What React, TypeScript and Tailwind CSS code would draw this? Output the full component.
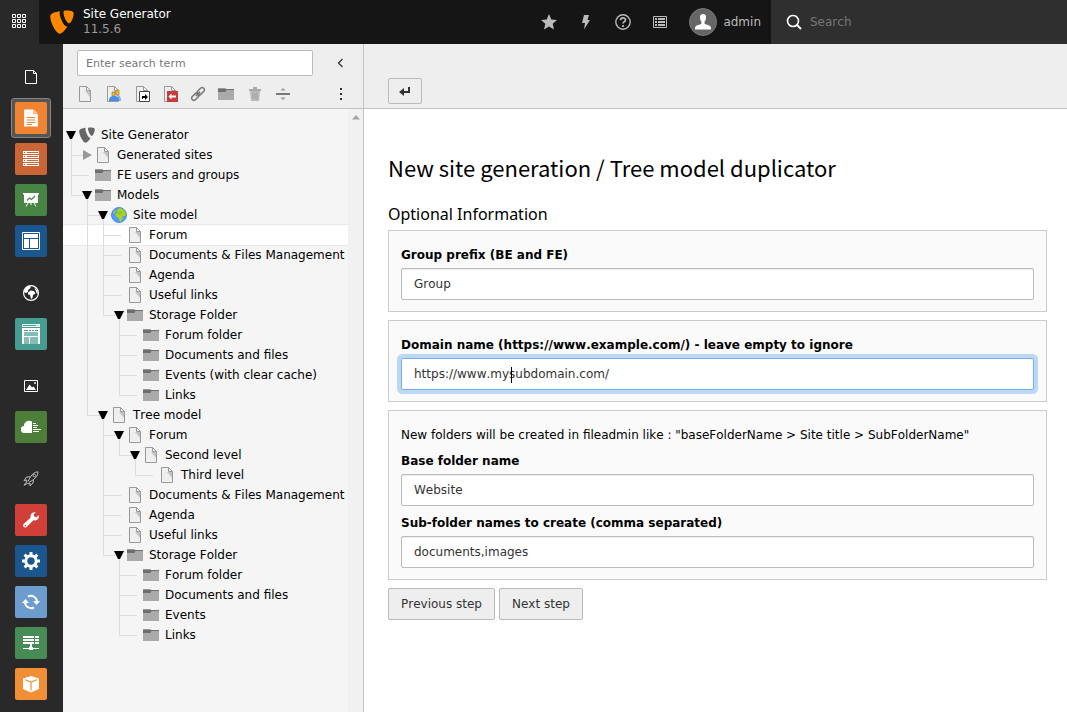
import type { ReactNode } from "react";

type IconName = "page" | "folder" | "globe" | "typo3";

type TreeItem = {
  label: string;
  depth: number;
  icon: IconName;
  // indent columns where an ancestor's vertical line runs through this row
  lines?: number[];
  last?: boolean;
  state?: "open" | "closed";
  active?: boolean;
};

const tree: TreeItem[] = [
  { label: "Site Generator", depth: 0, icon: "typo3", state: "open" },
  { label: "Generated sites", depth: 1, icon: "page", state: "closed" },
  { label: "FE users and groups", depth: 1, icon: "folder" },
  { label: "Models", depth: 1, icon: "folder", state: "open", last: true },
  { label: "Site model", depth: 2, icon: "globe", state: "open" },
  { label: "Forum", depth: 3, icon: "page", lines: [1], active: true },
  { label: "Documents & Files Management", depth: 3, icon: "page", lines: [1] },
  { label: "Agenda", depth: 3, icon: "page", lines: [1] },
  { label: "Useful links", depth: 3, icon: "page", lines: [1] },
  { label: "Storage Folder", depth: 3, icon: "folder", lines: [1], state: "open", last: true },
  { label: "Forum folder", depth: 4, icon: "folder", lines: [1] },
  { label: "Documents and files", depth: 4, icon: "folder", lines: [1] },
  { label: "Events (with clear cache)", depth: 4, icon: "folder", lines: [1] },
  { label: "Links", depth: 4, icon: "folder", lines: [1], last: true },
  { label: "Tree model", depth: 2, icon: "page", state: "open", last: true },
  { label: "Forum", depth: 3, icon: "page", state: "open" },
  { label: "Second level", depth: 4, icon: "page", lines: [2], state: "open", last: true },
  { label: "Third level", depth: 5, icon: "page", lines: [2], last: true },
  { label: "Documents & Files Management", depth: 3, icon: "page" },
  { label: "Agenda", depth: 3, icon: "page" },
  { label: "Useful links", depth: 3, icon: "page" },
  { label: "Storage Folder", depth: 3, icon: "folder", state: "open", last: true },
  { label: "Forum folder", depth: 4, icon: "folder" },
  { label: "Documents and files", depth: 4, icon: "folder" },
  { label: "Events", depth: 4, icon: "folder" },
  { label: "Links", depth: 4, icon: "folder", last: true },
];

function Svg({ children, size = 16 }: { children: ReactNode; size?: number }) {
  return (
    <svg width={size} height={size} viewBox="0 0 16 16" className="block shrink-0" aria-hidden="true">
      {children}
    </svg>
  );
}

function PageShape() {
  return (
    <>
      <path d="M2.5.5h7l4 4v11h-11z" fill="#efefef" stroke="#999" />
      <path d="M8 5h5v6z" fill="#c4c4c4" />
      <path d="M9.5.5v4h4z" fill="#fff" stroke="#999" />
    </>
  );
}

function FolderShape() {
  return (
    <>
      <path d="M0 2h7l1 1h8v11H0z" fill="#aaa" />
      <path d="M0 3h16v1H8.500L7.500 6H0z" fill="#6f6f6f" />
      <path d="M0 2h7l1 1H0z" fill="#999" />
    </>
  );
}

function Typo3Shape({ color }: { color: string }) {
  return (
    <g transform="translate(-1.100 -1) scale(1.150)">
      <path
        d="M11.100 10.300c-.2 0-.3.100-.5.100-1.700 0-4.100-5.800-4.100-7.700 0-.7.2-.9.4-1.100C4.900 1.800 2.400 2.400 1.500 3.500c-.2.300-.4.600-.4 1.100 0 3 3.200 10 5.700 10 1.100 0 2.900-2 4.300-4.300M10.100 1.200c2.200 0 4.600.2 4.600 1.700 0 2.500-1.700 5.700-2.500 5.700-1.500 0-3.400-4.200-3.400-6.200 0-.9.3-1.200 1.300-1.200"
        fill={color}
      />
    </g>
  );
}

function TreeIcon({ name }: { name: IconName }) {
  return (
    <Svg>
      {name === "page" && <PageShape />}
      {name === "folder" && <FolderShape />}
      {name === "typo3" && <Typo3Shape color="#666" />}
      {name === "globe" && (
        <>
          <circle cx="8" cy="8" r="7.500" fill="#59f" stroke="#4a8be8" />
          <path d="M6 3l3-2 4 2 2 4-1 2-2 0-.5 3-2 3-1.500-2v-2L5 9.500 4.500 7 6 5.500z" fill="#a5d41c" />
          <path d="M3.500 3.500L2 6l1.500.5L5 4z" fill="#a5d41c" />
          <path d="M6.500 5.500l2.500 1 2-1.500" fill="none" stroke="#7eb115" />
        </>
      )}
    </Svg>
  );
}

function TreeRow({ item }: { item: TreeItem }) {
  const { depth, lines = [] } = item;
  const cells = [];
  for (let i = 0; i < depth - 1; i++) {
    cells.push(
      <span key={i} className="flex h-5 w-4 shrink-0">
        {lines.includes(i) && <span className="ml-2 h-5 w-px bg-[#dcdcdc]" />}
      </span>
    );
  }
  return (
    <li
      className={
        item.active
          ? "flex h-5 items-center bg-white shadow-[0_1px_0_#e8e8e8,0_-1px_0_#e8e8e8]"
          : "flex h-5 items-center"
      }
    >
      {cells}
      {depth > 0 && (
        <svg width="16" height="20" className="block shrink-0" aria-hidden="true">
          <path
            d={item.last ? "M8.500 0v10.500H16" : "M8.500 0v20M8.500 10.500H16"}
            stroke="#dcdcdc"
            fill="none"
          />
        </svg>
      )}
      <svg width="16" height="20" className="block shrink-0" aria-hidden="true">
        {depth > 0 && !item.state && <path d="M0 10.500h10" stroke="#dcdcdc" />}
        {depth > 0 && item.state && <path d="M0 10.500h5" stroke="#dcdcdc" />}
        {item.state === "open" && (
          <>
            <path d="M8.500 12v8" stroke="#dcdcdc" />
            <path d="M3 6h10l-4 8H7z" fill="#000" />
          </>
        )}
        {item.state === "closed" && <path d="M4 5v10l9-5z" fill="#999" />}
      </svg>
      <TreeIcon name={item.icon} />
      <a href="#tree" className="ml-[6px] whitespace-nowrap leading-5 text-black">
        {item.label}
      </a>
    </li>
  );
}

const moduleButton = "grid h-8 w-8 place-items-center rounded-[2px]";

function ModuleMenu() {
  return (
    <nav aria-label="Modules" className="flex w-[63px] shrink-0 flex-col items-center bg-[#292929] pr-px">
      <button aria-label="Web" className="mt-[25px] grid h-4 w-8 place-items-center">
        <Svg>
          <path d="M2.500 1.500h8l3 3v10h-11zM10.500 1.500v3h3" fill="none" stroke="#fff" />
        </Svg>
      </button>
      <div className="mt-[17px] flex flex-col items-center gap-[9px]">
        <button aria-label="Page" className="-my-1 grid h-10 w-10 place-items-center rounded-[3px] border border-[#848484] bg-[#555]">
          <span className={moduleButton + " bg-[#f08432]"}>
            <Svg size={20}>
              <path d="M2.500 1.200h7.500v3.800h3.500v9.800h-11z" fill="#fff" />
              <path d="M10.500 1.200L13.500 4.500h-3z" fill="#f9c8a4" />
              <path d="M4.500 7.600h7M4.500 9.600h7M4.500 11.600h7M4.500 13.200h4.500" stroke="#f08432" strokeWidth=".8" />
            </Svg>
          </span>
        </button>
        <button aria-label="List" className={moduleButton + " bg-[#cb6535]"}>
          <svg width="16" height="16" aria-hidden="true">
            <path d="M0 1.500h16M0 5.500h16M0 9.500h16M0 13.500h16" stroke="#fff" strokeWidth="3" />
            <path d="M4 1.500h11M4 5.500h11M4 9.500h11M4 13.500h11M1 1.500h1M1 5.500h1M1 9.500h1M1 13.500h1" stroke="#cb6535" />
          </svg>
        </button>
        <button aria-label="View" className={moduleButton + " bg-[#488444]"}>
          <Svg>
            <path d="M0 1h16v1.500h-1V11H1V2.500H0z" fill="#fff" />
            <path d="M4 8.500L6.500 6l2 1.500L12 4" fill="none" stroke="#488444" strokeWidth="1.200" />
            <path d="M5 11l-2 3.500M11 11l2 3.500M8 11v2" stroke="#fff" />
          </Svg>
        </button>
        <button aria-label="Template" className={moduleButton + " bg-[#1b568f]"}>
          <svg width="18" height="18" aria-hidden="true">
            <path d="M.5.500h17v17H.5z" fill="none" stroke="#fff" />
            <path d="M2 2h14v4H2zM2 7h5v9H2zM8 7h8v9H8z" fill="#fff" />
          </svg>
        </button>
      </div>

      <button aria-label="Site management" className="mt-7 grid h-4 w-8 place-items-center">
        <Svg>
          <circle cx="8" cy="8" r="7.400" fill="none" stroke="#fff" strokeWidth="1.200" />
          <path d="M2 3.500L5 1l3 .500-1 2L5 5v2l-2 1-2-1zM5 7.500l2.500-2L11 6l1.500 2.500L10 10l-.5 3-1.500 1-1-4-2-.5zM11 2l3 3 1 4-1.500-1-1-3z" fill="#fff" />
        </Svg>
      </button>
      <button aria-label="Sites" className={moduleButton + " mt-[17px] bg-[#479c91]"}>
        <svg width="18" height="20" aria-hidden="true">
          <path d="M0 0h18v3H0zM0 4h18v16h-2V8H2v12H0z" fill="#fff" />
          <path d="M1 1h13v1H1zM15.500 1h1v1h-1zM2 6h4v1H2zM7 6h2v1H7zM10 6h2v1h-2zM13 6h3v1h-3z" fill="#479c91" />
          <path d="M2 8h14v4H2zM2 13h5v7H2zM8 13h8v7H8z" fill="#83bdb6" />
          <path d="M2 12h14v1H2zM7 12h1v8H7z" fill="#fff" />
        </svg>
      </button>

      <button aria-label="Filelist" className="mt-7 grid h-4 w-8 place-items-center">
        <Svg>
          <path d="M1.500 2.500h13v11h-13z" fill="none" stroke="#fff" />
          <path d="M3 12l3.500-5.500L9 9.500l1.500-1L13 12z" fill="#fff" />
          <path d="M11 4h2v2h-2z" fill="#bbb" />
        </Svg>
      </button>
      <button aria-label="Files" className={moduleButton + " mt-[17px] bg-[#4c7e3a]"}>
        <svg width="20" height="14" aria-hidden="true">
          <path d="M11 1.500V13H3.500A3.500 3.500 0 0 1 3 6C3 2 7-.5 11 1.500z" fill="#fff" />
          <path d="M12 3.500h3M12 5.500h5M12 7.500h4M12 9.500h8M12 11.500h6" stroke="#fff" />
        </svg>
      </button>

      <button aria-label="Admin tools" className="mt-7 grid h-4 w-8 place-items-center">
        <Svg>
          <path
            d="M15 .8c-3 .1-5.500 1.800-7.500 5L3.500 6 1 9.500l3-.5-1 2.500L5 13l2-1v3l3-3 .5-3.500C13.500 6.500 15 4 15 .8zM3 11.500l-2 2.800L3.500 13M7.500 5.800L5 10.500M10.500 8.500L6 11.500"
            fill="none"
            stroke="#bbb"
          />
          <circle cx="11.300" cy="4.600" r="1.300" fill="none" stroke="#bbb" />
        </Svg>
      </button>
      <div className="mt-[17px] flex flex-col gap-[9px]">
        <button aria-label="Maintenance" className={moduleButton + " bg-[#d13f39]"}>
          <Svg>
            <path
              d="M15.700 3.200l-2.500 2-2-.6-.6-2 2.200-2.300C9.500-.4 6.800 2 7.700 5.600L.7 12a2 2 0 0 0 0 2.800 2 2 0 0 0 2.800.2l7-6.700c3.800.8 6-2 5.200-5.100z"
              fill="#fff"
            />
            <circle cx="2.400" cy="13.500" r=".8" fill="#d13f39" />
          </Svg>
        </button>
        <button aria-label="Settings" className={moduleButton + " bg-[#1b568f]"}>
          <svg width="18" height="18" viewBox="-9 -9 18 18" aria-hidden="true">
            <circle r="5.200" fill="none" stroke="#fff" strokeWidth="3" />
            <path
              d="M0-9v3M0 9V6M-9 0h3M9 0H6M-6.400-6.400l2.200 2.200M6.400 6.400L4.200 4.200M-6.400 6.400l2.200-2.200M6.400-6.400L4.200-4.200"
              stroke="#fff"
              strokeWidth="3"
            />
          </svg>
        </button>
        <button aria-label="Upgrade" className={moduleButton + " bg-[#6d9dcf]"}>
          <svg width="18" height="16" viewBox="0 0 18 16" aria-hidden="true">
            <path d="M6 2.500A6.200 6.200 0 0 1 15 8M12 13.500A6.200 6.200 0 0 1 3 8" fill="none" stroke="#fff" strokeWidth="2" />
            <path d="M11 7h7l-3.500 4zM0 9h7L3.500 5z" fill="#fff" />
          </svg>
        </button>
        <button aria-label="Environment" className={moduleButton + " bg-[#468c54]"}>
          <svg width="16" height="16" aria-hidden="true">
            <path d="M0 1h16v2H0zM0 4h16v2H0zM0 7h16v2H0zM7 9h2v3H7zM0 13h16v1H0z" fill="#fff" />
            <path d="M6 12h4v3H6z" fill="#fff" />
            <path d="M11.500 1v8" stroke="#468c54" />
          </svg>
        </button>
        <button aria-label="Extensions" className={moduleButton + " bg-[#f18f36]"}>
          <svg width="18" height="18" viewBox="0 0 18 18" aria-hidden="true">
            <path d="M9 1l8 2.500V14l-8 3.500L1 14V3.500z" fill="#fff" />
            <path d="M3 4.800L9 7l6-2.200M9 7v8.500" fill="none" stroke="#f18f36" strokeWidth="1.200" />
          </svg>
        </button>
      </div>
    </nav>
  );
}

function Topbar() {
  return (
    <header className="flex h-11 shrink-0 bg-[#151515]">
      <button aria-label="Minimize/maximize module menu" className="grid w-[39px] place-items-center bg-[#292929] pr-px pb-[2px]">
        <svg width="14" height="14" aria-hidden="true" fill="none" stroke="#fff">
          <path d="M.5.500h3v3h-3zM5.500.500h3v3h-3zM10.500.500h3v3h-3zM.5 5.500h3v3h-3zM5.500 5.500h3v3h-3zM10.500 5.500h3v3h-3zM.5 10.500h3v3h-3zM5.500 10.500h3v3h-3zM10.500 10.500h3v3h-3z" />
        </svg>
      </button>
      <a href="#home" className="ml-[11px] flex items-center gap-[9px]">
        <Svg size={24}>
          <Typo3Shape color="#ff8700" />
        </Svg>
        <span className="leading-[15px]">
          <span className="block text-white">Site Generator</span>
          <span className="block text-[#999]">11.5.6</span>
        </span>
      </a>
      <div className="ml-auto flex items-center">
        <button aria-label="Bookmarks" className="grid h-11 w-[37px] place-items-center">
          <Svg>
            <path d="M8 0l2.300 5.400 5.700.5-4.300 3.800L13 15.500l-5-3.100-5 3.100 1.300-5.800L0 5.900l5.700-.5z" fill="#bbb" />
          </Svg>
        </button>
        <button aria-label="Clear cache" className="grid h-11 w-[37px] place-items-center">
          <Svg>
            <path d="M6 1h5L9.500 6H12L6 15.500 7 9H4z" fill="#bbb" />
          </Svg>
        </button>
        <button aria-label="Help" className="grid h-11 w-[37px] place-items-center">
          <Svg>
            <circle cx="8" cy="8" r="7.200" fill="none" stroke="#bbb" strokeWidth="1.400" />
            <path d="M5.500 6.300C5.500 3 10.500 3 10.500 6c0 1.800-2.500 1.700-2.500 3.600M8 11v2" fill="none" stroke="#bbb" strokeWidth="1.700" />
          </Svg>
        </button>
        <button aria-label="System information" className="grid h-11 w-[37px] place-items-center">
          <Svg>
            <path d="M1.500 2.500h13v11h-13z" fill="none" stroke="#bbb" />
            <path d="M3 5h2M3 8h2M3 11h2M6 5h7M6 8h7M6 11h7" stroke="#bbb" strokeWidth="2" />
          </Svg>
        </button>
        <button className="ml-[11px] flex h-11 items-center gap-[6px] pr-[10px] text-[#bbb]">
          <span className="grid h-7 w-7 place-items-center rounded-full border border-[#777] bg-[#666]">
            <Svg>
              <path
                d="M8 0c2.200 0 3.200 1.300 3 3.500-.1 2-.6 3.400-1.500 4.500v1.500c1 1 4 1.300 5.500 2.500 1 .8 1 2 1 3.500H0C0 14 0 12.800 1 12c1.500-1.200 4.500-1.500 5.500-2.500V8C5.600 6.900 5.100 5.500 5 3.500 4.800 1.300 5.800 0 8 0z"
                fill="#fff"
              />
            </Svg>
          </span>
          admin
        </button>
        <label className="flex h-11 w-[296px] items-center gap-2 bg-[#2f2f2f] pl-[15px]">
          <Svg>
            <circle cx="7" cy="7" r="5.500" fill="none" stroke="#fff" strokeWidth="1.600" />
            <path d="M11 11l4 4" stroke="#fff" strokeWidth="2" />
          </Svg>
          <input
            type="search"
            aria-label="Search"
            placeholder="Search"
            className="min-w-0 flex-1 bg-transparent outline-none placeholder:text-[#777]"
          />
        </label>
      </div>
    </header>
  );
}

function PageTree() {
  return (
    <aside className="flex w-[301px] shrink-0 flex-col border-r border-[#c3c3c3] bg-[#f5f5f5]">
      <div className="h-[65px] border-b border-[#c3c3c3] bg-[#eee] pt-[6px] pl-[14px]">
        <div className="flex items-center">
          <input
            type="text"
            aria-label="Enter search term"
            placeholder="Enter search term"
            className="h-[26px] w-[236px] rounded-[2px] border border-[#bbb] bg-white px-2 text-[11px] outline-none placeholder:text-[#777]"
          />
          <button aria-label="Collapse tree" className="ml-5 grid h-6 w-4 place-items-center">
            <Svg>
              <path d="M9.500 4L5.500 8l4 4" fill="none" stroke="#333" strokeWidth="1.300" />
            </Svg>
          </button>
        </div>
        <div className="mt-[10px] flex w-[272px] items-center justify-between">
          <div className="flex w-[214px] items-center justify-between">
            <button aria-label="New page">
              <Svg>
                <PageShape />
              </Svg>
            </button>
            <button aria-label="New backend user section">
              <Svg>
                <PageShape />
                <path d="M7 6h3v4H7zM11 4h3v5h-3z" fill="#f4bd45" stroke="#996c20" strokeWidth=".6" />
                <path d="M4 15c0-4 2-5 5-5s5 1 5 5z" fill="#4b8be8" />
                <path d="M12 9c3 0 4 2 4 6h-2c0-3-.5-4-2-5z" fill="#7fb3e6" />
              </Svg>
            </button>
            <button aria-label="New shortcut">
              <Svg>
                <PageShape />
                <path d="M5.500 5.500h10v10h-10z" fill="#fff" stroke="#444" />
                <path d="M8 13v-3h3V8l3 3-3 3v-2H9v1z" fill="#000" />
              </Svg>
            </button>
            <button aria-label="New mount point">
              <Svg>
                <PageShape />
                <path d="M5 5h11v11H5z" fill="#c83c3c" />
                <path d="M6.500 10.500l3-3v2H14v2H9.500v2z" fill="#fff" />
              </Svg>
            </button>
            <button aria-label="New link">
              <Svg>
                <g transform="rotate(-45 8 8)" fill="none" stroke="#777" strokeWidth="1.500">
                  <rect x="0" y="5.800" width="8.500" height="4.400" rx="2.200" />
                  <rect x="7.500" y="5.800" width="8.500" height="4.400" rx="2.200" />
                  <path d="M5 8h6" />
                </g>
              </Svg>
            </button>
            <button aria-label="New folder">
              <Svg>
                <FolderShape />
              </Svg>
            </button>
            <button aria-label="New recycler">
              <Svg>
                <path d="M2 3h12v2H2zM6 1h4v2H6z" fill="#aaa" />
                <path d="M3 5h10l-1 10H4z" fill="#b9b9b9" />
                <path d="M6 7v6M8 7v6M10 7v6" stroke="#a3a3a3" />
              </Svg>
            </button>
            <button aria-label="New divider">
              <Svg>
                <path d="M1 7h14v2H1z" fill="#777" />
                <path d="M5.500 4.500L8 2l2.500 2.500zM5.500 11.500L8 14l2.500-2.500z" fill="#999" />
              </Svg>
            </button>
          </div>
          <button aria-label="More options">
            <Svg>
              <path d="M7 2h2v2H7zM7 7h2v2H7zM7 12h2v2H7z" fill="#333" />
            </Svg>
          </button>
        </div>
      </div>
      <div className="flex min-h-0 flex-1">
        <ul className="min-w-0 flex-1 pt-4">
          {tree.map((item, index) => (
            <TreeRow key={index} item={item} />
          ))}
        </ul>
        <div className="flex w-[15px] shrink-0 justify-center bg-[#f1f1f1] pt-[6px]">
          <svg width="8" height="5" aria-hidden="true">
            <path d="M0 4.500L4 0l4 4.500z" fill="#a3a3a3" />
          </svg>
        </div>
      </div>
    </aside>
  );
}

const panel = "border border-[#ccc] bg-[#fafafa] px-3 pt-[14px] pb-[11px]";
const fieldLabel = "block leading-5 font-bold";
const field =
  "block h-8 w-full rounded-[2px] border border-[#bbb] bg-white px-3 text-[#333] shadow-[inset_0_1px_1px_rgba(0,0,0,0.075)] outline-none";
const focusedField =
  "flex h-8 w-full items-center rounded-[2px] border border-[#76b0ec] bg-white px-3 shadow-[0_0_0_4px_#bbd9f5]";
const stepButton = "h-8 rounded-[2px] border border-[#bbb] bg-[#eee] px-3 text-[#333]";

function Content() {
  return (
    <main className="min-w-0 flex-1 bg-white text-black">
      <div className="flex h-[65px] items-end border-b border-[#c3c3c3] bg-[#eee] px-6 pb-1">
        <button aria-label="Back" className="grid h-[26px] w-[34px] place-items-center rounded-[2px] border border-[#bbb] bg-[#eee]">
          <Svg>
            <path d="M12 4v5H6" fill="none" stroke="#333" strokeWidth="2" />
            <path d="M2 9l5-4v8z" fill="#333" />
          </Svg>
        </button>
      </div>
      <form className="pt-10 pr-5 pl-6" onSubmit={(e) => e.preventDefault()}>
        <h1 className="font-['Noto_Sans_CJK_SC',sans-serif] text-[22px] leading-9 [font-kerning:auto]">
          New site generation / Tree model duplicator
        </h1>
        <h2 className="mt-[19px] font-['Noto_Sans',sans-serif] text-base leading-5">Optional Information</h2>
        <div className={panel + " mt-[6px]"}>
          <label htmlFor="group" className={fieldLabel}>
            Group prefix (BE and FE)
          </label>
          <input id="group" type="text" defaultValue="Group" className={field + " mt-[3px]"} />
        </div>
        <div className={panel + " mt-2"}>
          <label htmlFor="domain" className={fieldLabel}>
            Domain name (https://www.example.com/) - leave empty to ignore
          </label>
          <div className={focusedField + " relative mt-[3px]"}>
            <input
              id="domain"
              type="text"
              defaultValue="https://www.mysubdomain.com/"
              className="w-full bg-transparent text-[#333] outline-none"
            />
            <span className="absolute top-2 left-[109px] h-4 w-px bg-black" />
          </div>
        </div>
        <div className={panel + " mt-2"}>
          <p className="leading-5">
            New folders will be created in fileadmin like : "baseFolderName &gt; Site title &gt; SubFolderName"
          </p>
          <label htmlFor="base" className={fieldLabel + " mt-[6px]"}>
            Base folder name
          </label>
          <input id="base" type="text" defaultValue="Website" className={field + " mt-[3px]"} />
          <label htmlFor="sub" className={fieldLabel + " mt-[7px]"}>
            Sub-folder names to create (comma separated)
          </label>
          <input id="sub" type="text" defaultValue="documents,images" className={field + " mt-[3px]"} />
        </div>
        <div className="mt-2 flex gap-1">
          <button type="button" className={stepButton}>
            Previous step
          </button>
          <button type="submit" className={stepButton}>
            Next step
          </button>
        </div>
      </form>
    </main>
  );
}

export default function App() {
  return (
    <div className="flex h-screen flex-col overflow-hidden font-['DejaVu_Sans',sans-serif] text-[12px] [font-kerning:none]">
      <Topbar />
      <div className="flex min-h-0 flex-1">
        <ModuleMenu />
        <PageTree />
        <Content />
      </div>
    </div>
  );
}
